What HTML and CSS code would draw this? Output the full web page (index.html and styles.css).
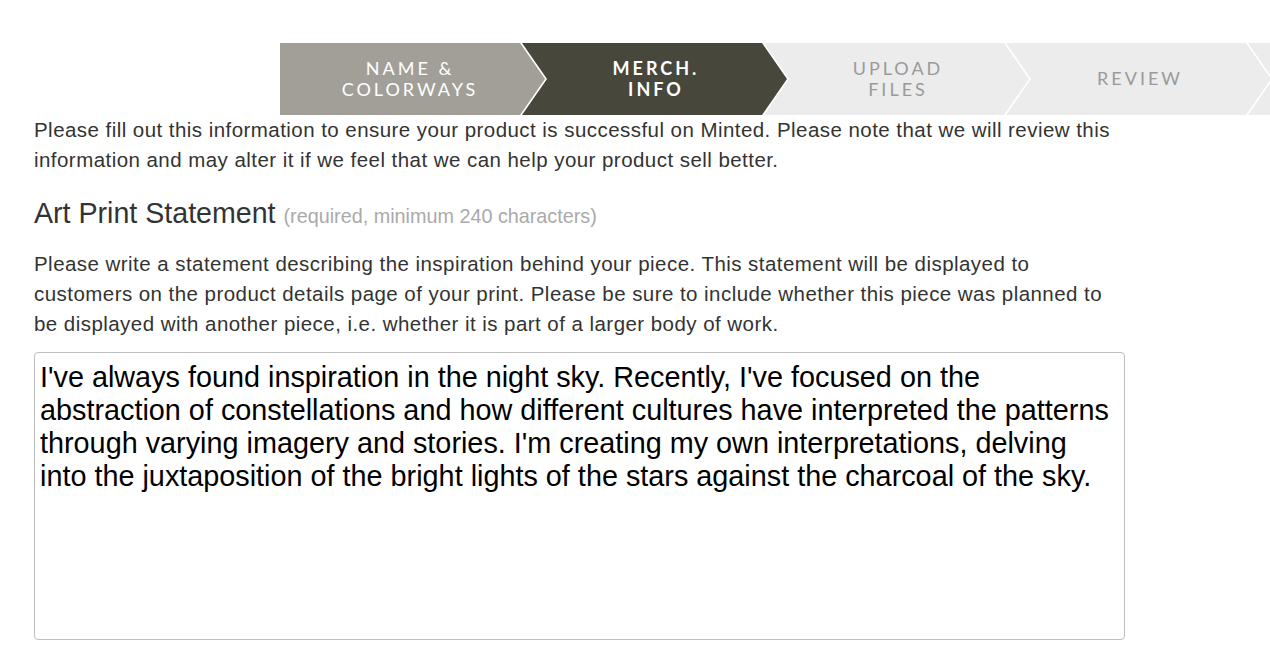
FILE: index.html
```html
<!DOCTYPE html>
<html lang="en">
<head>
<meta charset="utf-8">
<title>Merch. Info</title>
<link rel="stylesheet" href="styles.css">
</head>
<body>
<nav class="steps">
  <div class="step step-first step-done"><span>NAME &amp;<br>COLORWAYS</span></div>
  <div class="step step-current"><span>MERCH.<br>INFO</span></div>
  <div class="step step-todo"><span>UPLOAD<br>FILES</span></div>
  <div class="step step-todo"><span>REVIEW</span></div>
  <div class="step step-todo"><span></span></div>
</nav>
<main class="content">
  <p class="intro">Please fill out this information to ensure your product is successful on Minted. Please note that we will review this information and may alter it if we feel that we can help your product sell better.</p>
  <h2 class="field-title">Art Print Statement <small class="field-note">(required, minimum 240 characters)</small></h2>
  <p class="field-help">Please write a statement describing the inspiration behind your piece. This statement will be displayed to customers on the product details page of your print. Please be sure to include whether this piece was planned to be displayed with another piece, i.e. whether it is part of a larger body of work.</p>
  <textarea class="statement" readonly>I've always found inspiration in the night sky. Recently, I've focused on the abstraction of constellations and how different cultures have interpreted the patterns through varying imagery and stories. I'm creating my own interpretations, delving into the juxtaposition of the bright lights of the stars against the charcoal of the sky.</textarea>
</main>
</body>
</html>
```
FILE: styles.css
```css
html, body {
  margin: 0;
  padding: 0;
  background: #fff;
}

body {
  font-family: "Liberation Sans", Arial, Helvetica, sans-serif;
  color: #333;
}

.steps {
  display: flex;
  margin: 43px 0 0 280px;
  overflow: hidden;
  height: 72px;
}

.step {
  flex: none;
  width: 265px;
  height: 72px;
  margin-right: -23px;
  padding: 0 25px;
  box-sizing: border-box;
  display: flex;
  align-items: center;
  justify-content: center;
  text-align: center;
  font-family: Lato, "Open Sans", sans-serif;
  font-size: 18px;
  line-height: 21px;
  letter-spacing: 3px;
  clip-path: polygon(0 0, 240px 0, 265px 50%, 240px 100%, 0 100%, 25px 50%);
}

.step span {
  display: block;
  margin-right: -3px;
  margin-top: -1px;
}

.step-first {
  padding-left: 17px;
  clip-path: polygon(0 0, 240px 0, 265px 50%, 240px 100%, 0 100%);
}

.step-done {
  background: #a29f98;
  color: #fff;
}

.step-current {
  background: #47473c;
  color: #fff;
  font-weight: 700;
}

.step-todo {
  background: #ececec;
  color: #9a9a9a;
}

.content {
  padding: 0 34px;
}

.intro,
.field-help {
  margin: 0;
  font-size: 20.5px;
  letter-spacing: 0.45px;
  line-height: 30px;
  color: #333;
  max-width: 1092px;
}

.field-title {
  margin: 23px 0 18px;
  font-size: 28.6px;
  line-height: 30px;
  font-weight: 400;
  color: #333;
}

.field-note {
  font-size: 19.8px;
  color: #aaa;
}

.statement {
  display: block;
  margin-top: 13px;
  width: 1091px;
  height: 288px;
  box-sizing: border-box;
  padding: 8px 12px 8px 5px;
  border: 1px solid #bdbdbd;
  border-radius: 4px;
  font-family: "Liberation Sans", Arial, Helvetica, sans-serif;
  font-size: 28.8px;
  line-height: 33px;
  color: #000;
  resize: none;
  overflow: hidden;
  outline: none;
}
```
